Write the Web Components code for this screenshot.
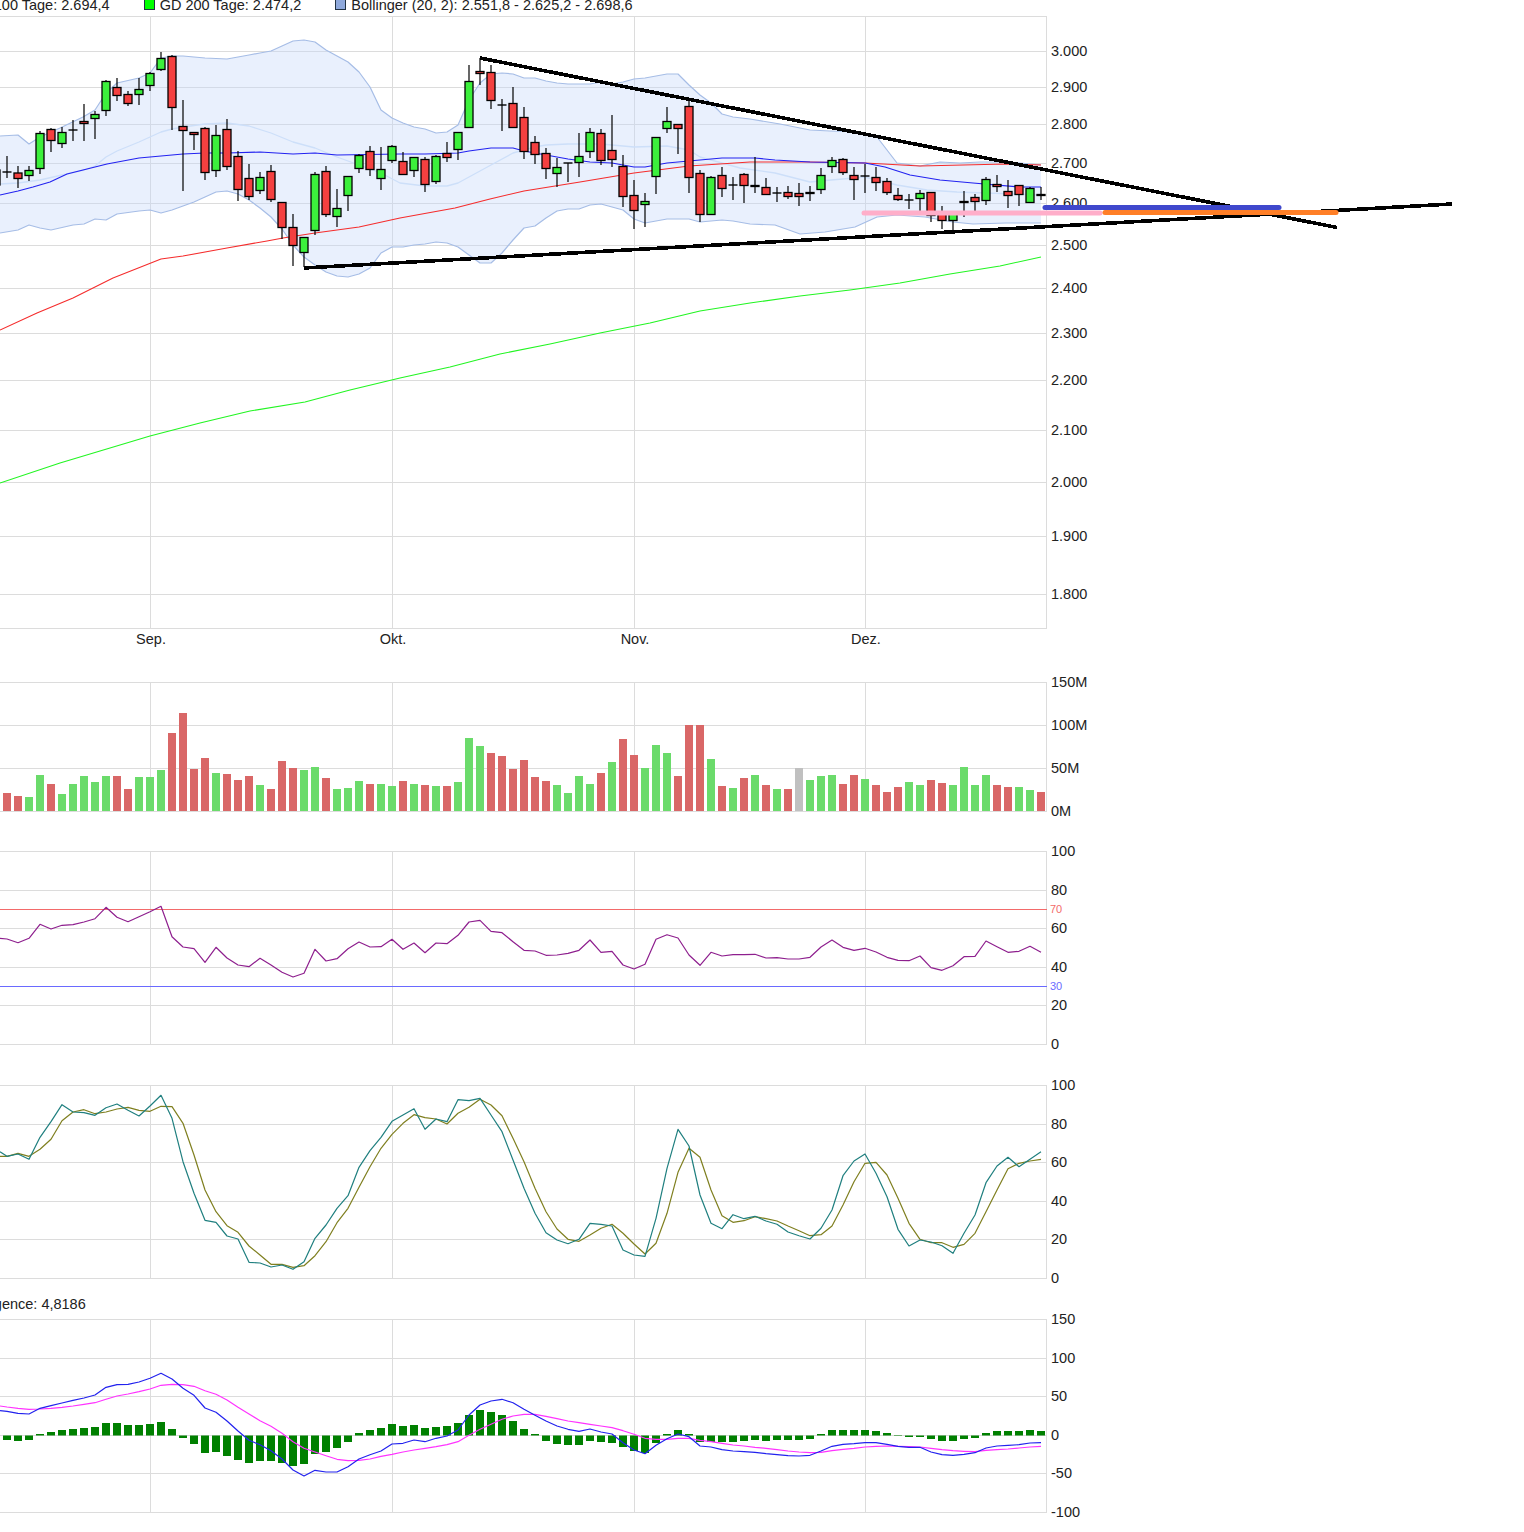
<!DOCTYPE html>
<html lang="de">
<head>
<meta charset="utf-8">
<title>Chart</title>
<style>
  html, body { margin: 0; background: #fff; overflow: hidden; }
  body { width: 1524px; height: 1532px; font: 14.5px "Liberation Sans", Arial, sans-serif; color: #222; }
</style>
</head>
<body>
<stock-chart>
  <chart-legend slot="top" shift="-48">
    <legend-item color="#ff0000">GD 100 Tage: 2.694,4</legend-item>
    <legend-item color="#00ff00">GD 200 Tage: 2.474,2</legend-item>
    <legend-item color="#8fa9dc">Bollinger (20, 2): 2.551,8 - 2.625,2 - 2.698,6</legend-item>
  </chart-legend>
</stock-chart>

<script>
// x of the i-th trading day, same for every panel
const dayX = i => 7 + 11 * i;
const MONTHS = [[150.5, 'Sep.'], [392.5, 'Okt.'], [634.5, 'Nov.'], [865.5, 'Dez.']];
const AXIS_X = 1046.5;

// [high, low, bodyTop, bodyBottom, type]
const CANDLES = [
  [156,178,172,172,'d'],[166,188,172.5,179,'r'],[166,181,170,176,'g'],[131,174,133,169,'g'],[128,152,129,141,'r'],
  [127,148,132,144,'g'],[120,141,130,130,'d'],[104,141,121,124,'r'],[111,139,114,119,'g'],[80,116,81,111,'g'],
  [78,101,87,96,'r'],[91,106,94,104,'r'],[78,105,89,95,'g'],[72,91,73,86,'g'],[52,71,58,70,'g'],
  [55,130,56,108,'r'],[100,191,126,131,'r'],[132,150,132,135,'r'],[127,180,128,173,'r'],[125,177,135,171,'g'],
  [119,170,129,167,'r'],[151,201,156,190,'r'],[164,200,178,197,'r'],[172,194,177,191,'g'],[165,202,171,200,'r'],
  [202,239,202,228,'r'],[214,266,227,246,'r'],[237,267,237,253,'g'],[172,235,174,231,'g'],[166,217,171,215,'r'],
  [189,227,208,217,'g'],[176,211,176,196,'g'],[154,173,155,169,'g'],[146,176,151,170,'r'],[147,190,169,179,'g'],
  [145,163,146,161,'g'],[152,175,161,175,'r'],[157,177,157,171,'g'],[157,192,159,185,'r'],[155,184,156,182,'g'],
  [142,162,153,158,'r'],[132,160,132,150,'g'],[65,128,81,128,'g'],[58,85,71,74,'r'],[65,109,72,101,'r'],
  [99,131,105,105,'d'],[87,128,103,128,'r'],[107,159,117,152,'r'],[136,164,142,155,'r'],[148,179,153,169,'r'],
  [158,187,167,174,'g'],[163,182,163,163,'d'],[133,177,156,163,'g'],[128,158,132,152,'g'],[129,165,133,161,'r'],
  [115,167,150,160,'r'],[155,207,166,197,'r'],[180,229,195,211,'r'],[193,227,201,205,'g'],[137,194,137,177,'g'],
  [107,133,121,129,'g'],[124,154,124,129,'r'],[100,193,106,178,'r'],[170,222,173,215,'r'],[176,215,177,215,'g'],
  [167,197,175,189,'r'],[177,200,185,185,'d'],[173,203,174,186,'r'],[157,193,185,187,'g'],[178,195,187,195,'r'],
  [187,202,193,193,'d'],[186,199,192,197,'r'],[183,206,193,197,'r'],[186,201,192,194,'r'],[168,194,175,190,'g'],
  [157,173,160,167,'g'],[158,175,159,173,'r'],[167,200,175,180,'r'],[164,193,176,176,'d'],[167,191,177,183,'r'],
  [178,195,181,193,'r'],[188,201,195,200,'r'],[194,209,200,200,'d'],[190,211,193,199,'g'],[192,222,192,216,'r'],
  [206,229,213,221,'r'],[213,231,213,221,'g'],[191,217,201,203,'r'],[194,211,197,202,'r'],[177,205,179,201,'g'],
  [175,192,184,187,'r'],[180,208,191,196,'r'],[185,206,185,195,'r'],[187,203,188,203,'g'],[187,200,194,196,'r']
];

const BAND_UP = [[0,136],[18,135],[29,144],[40,137],[60,128],[83,117],[95,110],[106,93],[117,83],[139,78],[150,73],[161,58],[172,56],[183,56],[205,58],[227,59],[249,55],[260,53],[271,51],[282,46],[293,41],[304,40],[315,42],[326,50],[337,56],[348,62],[359,72],[370,87],[381,110],[392,118],[403,123],[414,127],[425,129],[436,133],[447,132],[458,125],[469,100],[480,83],[491,74],[502,73],[513,74],[524,78],[535,78],[546,81],[557,83],[568,84],[590,84],[601,82],[612,84],[623,82],[634,79],[645,78],[667,74],[678,74],[689,85],[700,95],[711,103],[722,114],[733,117],[750,119],[780,124],[810,130],[830,131],[860,132],[877,137],[897,163],[920,166],[940,162],[960,163],[980,162],[1000,162],[1020,163],[1041,165]];
const BAND_LOW = [[0,233],[18,230],[29,225],[40,228],[51,230],[73,225],[84,224],[95,219],[106,220],[117,214],[139,211],[150,210],[161,213],[172,210],[183,206],[194,202],[205,197],[216,192],[227,191],[238,194],[249,200],[260,208],[271,217],[282,229],[293,245],[304,257],[315,265],[326,272],[337,276],[348,277],[359,274],[370,268],[381,253],[392,247],[403,247],[414,245],[425,244],[436,242],[447,243],[458,247],[469,255],[480,263],[491,263],[502,253],[513,240],[524,228],[535,226],[546,218],[557,211],[568,209],[579,209],[590,205],[601,204],[612,207],[623,210],[634,219],[645,223],[656,221],[667,219],[678,219],[689,219],[700,222],[711,221],[722,220],[733,221],[750,224],[775,225],[800,234],[825,232],[855,227],[877,217],[897,215],[925,217],[953,222],[973,224],[1006,223],[1041,223]];
const BAND_MID = [[0,184],[18,183],[40,180],[84,170],[95,166],[106,157],[117,151],[139,142],[150,137],[161,132],[172,129],[183,127],[205,124],[227,123],[249,126],[271,133],[293,142],[315,148],[337,157],[359,165],[381,173],[400,183],[425,186],[447,186],[458,183],[469,177],[491,165],[513,153],[535,147],[546,145],[568,144],[601,144],[634,147],[667,146],[689,150],[700,157],[722,163],[740,168],[775,173],[810,182],[820,181],[865,177],[897,185],[927,190],[957,192],[1041,195]];
const GD38 = [[0,195],[18,191],[33,187],[50,182],[67,174],[83,170],[107,164],[139,158],[161,156],[183,154],[205,153],[227,153],[260,152],[293,154],[315,153],[337,155],[400,154],[425,154],[458,153],[469,151],[491,148],[513,148],[524,151],[546,155],[568,159],[590,162],[612,163],[634,167],[645,167],[656,165],[667,163],[689,161],[722,158],[755,158],[775,160],[810,162],[865,163],[885,167],[910,175],[940,180],[973,183],[1020,187],[1041,187]];
const GD100 = [[0,330],[37,313],[73,298],[113,278],[161,259],[183,256],[227,248],[267,241],[283,238],[315,233],[359,227],[400,218],[455,208],[490,199],[524,191],[580,182],[634,173],[689,166],[750,162],[810,162],[865,163],[920,166],[1006,164],[1041,165]];
const GD200 = [[0,483],[60,463],[100,451],[150,436],[200,423],[250,411],[305,402],[350,390],[400,378],[450,367],[500,354],[550,344],[600,333],[650,323],[700,311],[750,303],[800,296],[850,290],[900,283],[950,274],[1000,266],[1041,257]];

// bar tops as read from 3x crops, base line is 423
const VOL_TOP = [369,378,381,315,342,372,342,318,336,318,318,357,321,321,300,189,129,297,264,309,312,330,318,345,357,273,294,300,291,324,357,354,333,342,342,348,333,342,345,348,348,336,204,228,249,258,297,270,321,333,345,369,318,342,309,276,207,255,294,225,249,318,165,165,267,348,354,324,315,345,357,357,294,330,318,315,342,315,327,345,366,351,336,345,330,339,345,291,345,315,345,351,351,360,366];
const VOL_TYPES = ('rrgg r ggggg rr ggg rrrr g rrr g rrr gg r ggg r gg r g r g r ggg rrrrr'
  + ' r gggg r g rr ggg rrr g r g r g r g r b ggg rr g rrr gg rr gggg rr gg r').replace(/ /g, '');

const RSI = [145,147,158,145,103,117,106,104,96,86,52,82,95,80,65,49,140,171,176,217,172,204,225,230,205,225,247,261,250,178,213,206,176,156,171,170,148,178,159,188,159,161,136,96,91,124,128,155,181,183,196,195,190,181,150,187,184,225,237,223,148,134,144,195,226,187,198,194,194,193,204,203,207,207,202,171,150,172,181,175,186,202,211,212,198,233,241,227,200,199,153,170,187,184,169,187];
const STO_K = [215,229,222,238,172,125,74,96,98,106,83,72,91,108,78,46,115,245,340,421,427,468,477,547,549,561,555,568,545,475,435,385,347,262,212,172,124,105,86,148,117,125,59,62,55,105,155,240,325,400,458,480,491,478,430,433,438,510,525,529,415,265,148,198,345,430,446,404,416,409,423,433,456,467,477,445,390,287,243,222,280,350,448,498,480,486,497,520,460,405,308,258,232,260,238,215];
const STO_D = [229,229,220,229,208,178,122,96,89,101,96,87,82,91,94,79,80,130,225,330,395,437,457,498,525,553,553,562,557,527,485,428,385,322,260,205,163,130,104,113,117,132,100,82,58,75,107,175,245,325,395,447,478,484,465,445,433,460,492,522,490,400,277,205,232,330,407,427,422,410,416,423,438,452,467,464,438,375,305,250,247,285,355,430,478,488,488,502,493,460,395,330,266,250,243,238];
const HIST = [450,453,450,432,426,420,417,414,411,399,399,405,405,402,396,417,444,462,489,486,498,510,519,513,513,519,528,522,492,486,474,456,429,420,414,402,408,405,414,411,408,399,375,360,366,375,393,417,432,453,462,465,465,453,456,459,471,483,489,459,432,420,432,456,456,456,456,453,450,453,450,450,450,447,432,420,420,420,420,423,429,438,441,441,447,453,453,447,444,429,423,423,423,420,423];
const MACD = [362,364,370,372,355,347,339,331,324,315,292,284,283,276,265,250,267,295,316,354,367,393,423,451,464,482,507,540,558,541,546,546,530,507,494,483,462,460,450,455,445,438,420,375,345,333,328,338,358,376,393,408,418,424,417,426,432,458,480,491,466,446,432,440,468,471,479,483,485,487,491,494,497,498,496,483,469,463,461,458,458,463,469,472,472,486,494,496,493,488,474,468,466,464,459,458];
const SIGNAL = [348,351,355,358,357,355,352,348,343,338,328,318,312,305,297,286,283,284,289,302,313,330,352,372,392,409,430,455,475,486,497,508,512,511,507,499,493,486,480,475,470,464,455,436,418,403,388,378,373,373,379,386,393,398,403,408,413,422,433,445,448,448,445,445,451,455,460,465,468,472,475,479,483,486,488,487,482,478,475,471,469,468,469,470,471,475,479,482,484,485,481,479,477,474,471,469];

const poly = (pts, color, w, extra = '') =>
  `<polyline fill="none" stroke="${color}" stroke-width="${w}" stroke-linejoin="round" points="${pts.map(p => p.join(',')).join(' ')}" ${extra}/>`;

// series with one leading value at x=0, measured in 3x crops
const series = (vals, base) => vals.map((v, i) => [i === 0 ? 0 : dayX(i - 1), +(base + v / 3).toFixed(1)]);

class ChartPanel extends HTMLElement {
  // page y of the panel's first pixel row, its height, grid rows as [y, label]
  get top() { return 0; }
  get height() { return 0; }
  get rows() { return []; }
  get firstRow() { return this.rows[0][0]; }
  get lastRow() { return this.rows[this.rows.length - 1][0]; }

  below() { return ''; }
  above() { return ''; }

  connectedCallback() {
    const { top, height, rows } = this;
    const grid = rows.map(([y]) => `<line x1="0" x2="${AXIS_X}" y1="${y}" y2="${y}"/>`).join('')
      + MONTHS.map(([x]) => `<line x1="${x}" x2="${x}" y1="${this.firstRow}" y2="${this.lastRow}"/>`).join('')
      + `<line x1="${AXIS_X}" x2="${AXIS_X}" y1="${this.firstRow}" y2="${this.lastRow}"/>`;
    const labels = rows.filter(r => r[1] !== undefined)
      .map(([y, t]) => `<text x="1051" y="${y + 4.7}">${t}</text>`).join('');
    this.attachShadow({ mode: 'open' }).innerHTML = `
      <style>
        :host { display: block; height: ${height}px; }
        svg { display: block; width: 1524px; height: ${height}px; overflow: hidden; }
        text { font: 14.5px "Liberation Sans", Arial, sans-serif; fill: #222; }
        .grid line { stroke: #dcdcdc; stroke-width: 1; shape-rendering: crispEdges; }
      </style>
      <svg viewBox="0 ${top} 1524 ${height}">
        <g class="grid">${grid}</g>
        ${labels}
        ${this.below()}
        ${this.above()}
      </svg>`;
  }
}

class PricePanel extends ChartPanel {
  get top() { return 16; }
  get height() { return 644; }
  get rows() {
    return [[16.5],[51.5,'3.000'],[87.5,'2.900'],[124.5,'2.800'],[163.5,'2.700'],[203.5,'2.600'],[245.5,'2.500'],[288.5,'2.400'],
      [333.5,'2.300'],[380.5,'2.200'],[430.5,'2.100'],[482.5,'2.000'],[536.5,'1.900'],[594.5,'1.800'],[628.5]];
  }
  below() {
    const band = BAND_UP.concat(BAND_LOW.slice().reverse()).map(p => p.join(',')).join(' ');
    return `<polygon points="${band}" fill="#c4d8fa" fill-opacity=".38"/>`
      + poly(BAND_MID, '#cddff9', 1.3)
      + poly(BAND_UP, '#a6bde6', 1.2) + poly(BAND_LOW, '#a6bde6', 1.2)
      + poly(GD200, '#22f522', 1.1) + poly(GD100, '#f52c2c', 1.1) + poly(GD38, '#2222f0', 1.1)
      + MONTHS.map(([x, t]) => `<text x="${x + .5}" y="643.5" text-anchor="middle">${t}</text>`).join('');
  }
  above() {
    const candles = CANDLES.map(([hi, lo, top, bot, type], i) => {
      const x = dayX(i);
      let s = `<line x1="${x}" x2="${x}" y1="${hi}" y2="${lo}" stroke="#000" stroke-width="1.2"/>`;
      if (type === 'd') {
        s += `<line x1="${x - 4.5}" x2="${x + 4.5}" y1="${top}" y2="${top}" stroke="#000" stroke-width="1.4"/>`;
      } else {
        s += `<rect x="${x - 4}" y="${top + .5}" width="8" height="${bot - top - 1}" fill="${type === 'g' ? '#3cf03c' : '#f44040'}" stroke="#000" stroke-width="1.3"/>`;
      }
      return s;
    }).join('');
    const trend = (x1, y1, x2, y2) =>
      `<line x1="${x1}" y1="${y1}" x2="${x2}" y2="${y2}" stroke="#000" stroke-width="3.6" shape-rendering="crispEdges"/>`;
    const level = (x1, x2, y, c) =>
      `<line x1="${x1}" x2="${x2}" y1="${y}" y2="${y}" stroke="${c}" stroke-width="5" stroke-linecap="round"/>`;
    return `<rect x="-8" y="170" width="8" height="15" fill="#3cf03c" stroke="#000" stroke-width="1.3"/>`
      + candles
      + trend(480, 58, 1337, 227.5) + trend(304, 268, 1452, 204)
      + level(864, 1100, 213, '#ffaec9')
      + level(1045, 1279, 207.5, '#3f48cc')
      + level(1105, 1336, 212.5, '#ff7f27');
  }
}

class VolumePanel extends ChartPanel {
  get top() { return 660; }
  get height() { return 180; }
  get rows() { return [[682.5,'150M'],[725.5,'100M'],[768.5,'50M'],[811.5,'0M']]; }
  below() {
    const col = { r: '#d96767', g: '#6bdb6b', b: '#c0c0c0' };
    return VOL_TOP.map((t, i) => {
      const y = 670 + t / 3;
      return `<rect x="${dayX(i) - 4}" y="${y}" width="8" height="${811 - y}" fill="${col[VOL_TYPES[i]]}"/>`;
    }).join('');
  }
}

class RsiPanel extends ChartPanel {
  get top() { return 840; }
  get height() { return 235; }
  get rows() { return [[851.5,'100'],[890.5,'80'],[928.5,'60'],[967.5,'40'],[1005.5,'20'],[1044.5,'0']]; }
  below() {
    const guide = (y, c, t) =>
      `<line x1="0" x2="${AXIS_X}" y1="${y}" y2="${y}" stroke="${c}" stroke-width="1" shape-rendering="crispEdges"/>
       <text x="1050" y="${y + 3.5}" style="font-size:11px;fill:${c}">${t}</text>`;
    return guide(909.5, '#f36a6a', 70) + guide(986.5, '#6a6aff', 30) + poly(series(RSI, 890), '#8e1f8e', 1.2);
  }
}

class StochPanel extends ChartPanel {
  get top() { return 1075; }
  get height() { return 215; }
  get rows() { return [[1085.5,'100'],[1124.5,'80'],[1162.5,'60'],[1201.5,'40'],[1239.5,'20'],[1278.5,'0']]; }
  below() {
    return poly(series(STO_D, 1080), '#7f7f1f', 1.2) + poly(series(STO_K, 1080), '#1f7f7f', 1.2);
  }
}

class MacdPanel extends ChartPanel {
  get top() { return 1313; }
  get height() { return 219; }
  get rows() { return [[1319.5,'150'],[1358.5,'100'],[1396.5,'50'],[1435.5,'0'],[1473.5,'-50'],[1512.5,'-100']]; }
  below() {
    const bars = HIST.map((v, i) => {
      const y = 1290 + v / 3, zero = 1435.5;
      return `<rect x="${dayX(i) - 4}" y="${Math.min(y, zero)}" width="8" height="${Math.abs(y - zero)}" fill="#008000"/>`;
    }).join('');
    return bars + poly(series(SIGNAL, 1290), '#ff33ff', 1.2) + poly(series(MACD, 1290), '#2222ee', 1.2);
  }
}

class LegendItem extends HTMLElement {
  connectedCallback() {
    this.attachShadow({ mode: 'open' }).innerHTML = `
      <style>
        :host { display: flex; align-items: center; gap: 5px; white-space: nowrap; }
        i { display: block; width: 9px; height: 9px; margin-bottom: 2px; border: 1px solid #234; background: ${this.getAttribute('color')}; }
      </style>
      <i></i><slot></slot>`;
  }
}

class ChartLegend extends HTMLElement {
  connectedCallback() {
    this.attachShadow({ mode: 'open' }).innerHTML = `
      <style>
        :host { display: block; height: 16px; overflow: hidden; }
        div { display: flex; gap: 34px; line-height: 16px; margin: -3px 0 0 ${this.getAttribute('shift') || 0}px; }
      </style>
      <div><slot></slot></div>`;
  }
}

class ChartCaption extends HTMLElement {
  connectedCallback() {
    this.attachShadow({ mode: 'open' }).innerHTML = `
      <style>
        :host { display: block; height: 23px; overflow: hidden; white-space: nowrap; line-height: 16px; padding-top: 6px; box-sizing: border-box; margin-left: -40px; }
      </style>
      <slot></slot>`;
  }
}

class StockChart extends HTMLElement {
  constructor() {
    super();
    this.attachShadow({ mode: 'open' }).innerHTML = `
      <style>
        :host { display: block; width: 1524px; height: 1532px; overflow: hidden; font: 14.5px "Liberation Sans", Arial, sans-serif; color: #222; }
      </style>
      <slot name="top"></slot>
      <price-panel></price-panel>
      <volume-panel></volume-panel>
      <rsi-panel></rsi-panel>
      <stoch-panel></stoch-panel>
      <chart-caption>Divergence: 4,8186</chart-caption>
      <macd-panel></macd-panel>`;
  }
}

customElements.define('legend-item', LegendItem);
customElements.define('chart-legend', ChartLegend);
customElements.define('chart-caption', ChartCaption);
customElements.define('price-panel', PricePanel);
customElements.define('volume-panel', VolumePanel);
customElements.define('rsi-panel', RsiPanel);
customElements.define('stoch-panel', StochPanel);
customElements.define('macd-panel', MacdPanel);
customElements.define('stock-chart', StockChart);
</script>
</body>
</html>
